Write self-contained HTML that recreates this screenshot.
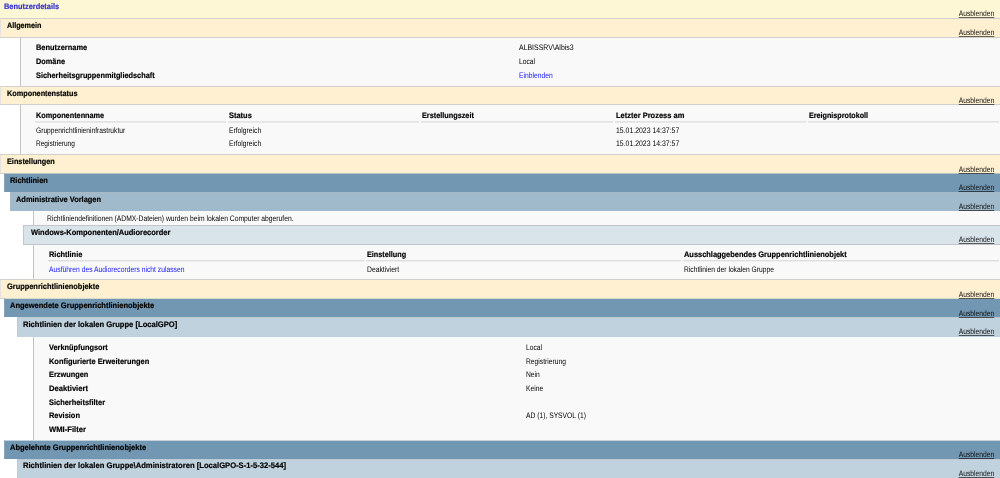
<!DOCTYPE html>
<html lang="de"><head><meta charset="utf-8"><title>Benutzerdetails</title>
<style>
html,body{margin:0;padding:0;background:#fff;}
body{width:1000px;height:478px;overflow:hidden;position:relative;font-family:"Liberation Sans",sans-serif;font-size:8.0px;color:#000;line-height:10px;text-rendering:geometricPrecision;}
.h{position:absolute;right:0;box-sizing:border-box;border:1px solid #c4c4c4;border-right:none;background-clip:padding-box;}
.h.y0{border-top:none;border-left:none;border-color:#d6d2c0;}
.h.y{border-color:#d0d0cc;border-left-color:#e2e2e2;}
.h.k{border-color:rgba(187,187,187,.35);border-bottom-color:transparent;background-clip:border-box;}
.h.g{border-color:#c2c6ca;}
.c{position:absolute;right:0;box-sizing:border-box;background:#F9F9F9;border-left:1px solid #c4c4c4;}
.t{position:absolute;white-space:nowrap;transform-origin:0 50%;transform:scaleX(0.84);}
.b{font-weight:bold;transform:scaleX(0.922);-webkit-text-stroke:0.2px currentColor;}
.a{left:auto;right:6px;transform-origin:100% 50%;text-decoration:underline;text-decoration-color:rgba(0,0,0,.6);color:#111;}
.txt{position:absolute;left:0;top:0;width:1000px;height:478px;will-change:opacity;}
.l{color:#1515ff;}
.u{position:absolute;height:2px;background:linear-gradient(#e3e3e3 50%,#e9e9e9 50%);}
.u2{background:linear-gradient(#dedede 50%,#eeeeee 50%);}
</style></head><body>
<div class="c" style="left:20px;top:37px;height:49px"></div>
<div class="c" style="left:20px;top:104px;height:50px"></div>
<div class="c" style="left:33px;top:210px;height:15px"></div>
<div class="c" style="left:33px;top:244px;height:36px"></div>
<div class="c" style="left:33px;top:336px;height:105px"></div>
<div class="h y0" style="left:0px;top:0px;height:19px;background-color:#FEF7D6"></div>
<div class="h y" style="left:0px;top:18px;height:20px;background-color:#FEF0D0"></div>
<div class="h y" style="left:0px;top:86px;height:19px;background-color:#FEF0D0"></div>
<div class="h y" style="left:0px;top:154px;height:20px;background-color:#FEF0D0"></div>
<div class="h k" style="left:4px;top:173px;height:19px;background-color:#7197B3;border-top-color:#B7C3C1"></div>
<div class="h k" style="left:10px;top:192px;height:19px;background-color:#A0BACB"></div>
<div class="h g" style="left:23px;top:225px;height:20px;background-color:#D9E3EA"></div>
<div class="h y" style="left:0px;top:279px;height:20px;background-color:#FEF0D0"></div>
<div class="h k" style="left:4px;top:298px;height:19px;background-color:#7197B3;border-top-color:#DBDAC9"></div>
<div class="h k" style="left:17px;top:317px;height:20px;background-color:#C0D2DE"></div>
<div class="h k" style="left:4px;top:440px;height:19px;background-color:#7197B3;border-top-color:#C3D2DD"></div>
<div class="h k" style="left:17px;top:459px;height:20px;background-color:#C0D2DE"></div>
<div class="txt">
<div class="t b" style="left:3.7px;top:2px;color:#3333CC;transform:scaleX(0.925)">Benutzerdetails</div>
<div class="t a" style="top:9px">Ausblenden</div>
<div class="t b" style="left:6.8px;top:21px;transform:scaleX(0.900)">Allgemein</div>
<div class="t a" style="top:28px">Ausblenden</div>
<div class="t b" style="left:6.9px;top:89px;transform:scaleX(0.912)">Komponentenstatus</div>
<div class="t a" style="top:96px">Ausblenden</div>
<div class="t b" style="left:6.8px;top:157px;transform:scaleX(0.911)">Einstellungen</div>
<div class="t a" style="top:165px">Ausblenden</div>
<div class="t b" style="left:9.9px;top:176px;transform:scaleX(0.924)">Richtlinien</div>
<div class="t a" style="top:183px">Ausblenden</div>
<div class="t b" style="left:16.2px;top:195px;transform:scaleX(0.930)">Administrative Vorlagen</div>
<div class="t a" style="top:202px">Ausblenden</div>
<div class="t b" style="left:30.8px;top:228px;transform:scaleX(0.937)">Windows-Komponenten/Audiorecorder</div>
<div class="t a" style="top:235px">Ausblenden</div>
<div class="t b" style="left:6.8px;top:282px;transform:scaleX(0.927)">Gruppenrichtlinienobjekte</div>
<div class="t a" style="top:290px">Ausblenden</div>
<div class="t b" style="left:9.9px;top:301px;transform:scaleX(0.938)">Angewendete Gruppenrichtlinienobjekte</div>
<div class="t a" style="top:309px">Ausblenden</div>
<div class="t b" style="left:22.8px;top:320px;transform:scaleX(0.951)">Richtlinien der lokalen Gruppe [LocalGPO]</div>
<div class="t a" style="top:327px">Ausblenden</div>
<div class="t b" style="left:9.9px;top:443px;transform:scaleX(0.936)">Abgelehnte Gruppenrichtlinienobjekte</div>
<div class="t a" style="top:450px">Ausblenden</div>
<div class="t b" style="left:22.8px;top:461px;transform:scaleX(0.953)">Richtlinien der lokalen Gruppe\Administratoren [LocalGPO-S-1-5-32-544]</div>
<div class="t a" style="top:469px">Ausblenden</div>
<div class="t b" style="left:36px;top:43px;transform:scaleX(0.927)">Benutzername</div>
<div class="t " style="left:519px;top:43px;transform:scaleX(0.867)">ALBISSRV\Albis3</div>
<div class="t b" style="left:36px;top:57px;transform:scaleX(0.919)">Domäne</div>
<div class="t " style="left:519px;top:57px">Local</div>
<div class="t b" style="left:36px;top:71px;transform:scaleX(0.917)">Sicherheitsgruppenmitgliedschaft</div>
<div class="t l" style="left:519px;top:71px">Einblenden</div>
<div class="t b" style="left:36.0px;top:111px;transform:scaleX(0.913)">Komponentenname</div>
<div class="u" style="left:35.0px;top:121px;width:191.2px"></div>
<div class="t b" style="left:229.2px;top:111px;transform:scaleX(0.932)">Status</div>
<div class="u" style="left:228.2px;top:121px;width:191.2px"></div>
<div class="t b" style="left:422.4px;top:111px;transform:scaleX(0.911)">Erstellungszeit</div>
<div class="u" style="left:421.4px;top:121px;width:191.2px"></div>
<div class="t b" style="left:615.6px;top:111px;transform:scaleX(0.938)">Letzter Prozess am</div>
<div class="u" style="left:614.6px;top:121px;width:191.2px"></div>
<div class="t b" style="left:808.8px;top:111px;transform:scaleX(0.898)">Ereignisprotokoll</div>
<div class="u" style="left:807.8px;top:121px;width:191.2px"></div>
<div class="t " style="left:36px;top:126px;transform:scaleX(0.832)">Gruppenrichtlinieninfrastruktur</div>
<div class="t " style="left:229.2px;top:126px">Erfolgreich</div>
<div class="t " style="left:615.6px;top:126px;transform:scaleX(0.862)">15.01.2023 14:37:57</div>
<div class="t " style="left:36px;top:139px;transform:scaleX(0.816)">Registrierung</div>
<div class="t " style="left:229.2px;top:139px">Erfolgreich</div>
<div class="t " style="left:615.6px;top:139px;transform:scaleX(0.862)">15.01.2023 14:37:57</div>
<div class="t " style="left:47px;top:214px;transform:scaleX(0.844)">Richtliniendefinitionen (ADMX-Dateien) wurden beim lokalen Computer abgerufen.</div>
<div class="t b" style="left:49.0px;top:250px;transform:scaleX(0.925)">Richtlinie</div>
<div class="u u2" style="left:48.0px;top:260px;width:315.7px"></div>
<div class="t b" style="left:366.7px;top:250px;transform:scaleX(0.906)">Einstellung</div>
<div class="u u2" style="left:365.7px;top:260px;width:315.7px"></div>
<div class="t b" style="left:684.3px;top:250px;transform:scaleX(0.929)">Ausschlaggebendes Gruppenrichtlinienobjekt</div>
<div class="u u2" style="left:683.3px;top:260px;width:315.7px"></div>
<div class="t l" style="left:49px;top:265px;transform:scaleX(0.844)">Ausführen des Audiorecorders nicht zulassen</div>
<div class="t " style="left:366.7px;top:265px;transform:scaleX(0.848)">Deaktiviert</div>
<div class="t " style="left:684.3px;top:265px;transform:scaleX(0.839)">Richtlinien der lokalen Gruppe</div>
<div class="t b" style="left:49px;top:343px;transform:scaleX(0.919)">Verknüpfungsort</div>
<div class="t " style="left:525.5px;top:343px">Local</div>
<div class="t b" style="left:49px;top:357px;transform:scaleX(0.928)">Konfigurierte Erweiterungen</div>
<div class="t " style="left:525.5px;top:357px">Registrierung</div>
<div class="t b" style="left:49px;top:370px;transform:scaleX(0.919)">Erzwungen</div>
<div class="t " style="left:525.5px;top:370px">Nein</div>
<div class="t b" style="left:49px;top:384px;transform:scaleX(0.953)">Deaktiviert</div>
<div class="t " style="left:525.5px;top:384px">Keine</div>
<div class="t b" style="left:49px;top:398px;transform:scaleX(0.928)">Sicherheitsfilter</div>
<div class="t b" style="left:49px;top:411px;transform:scaleX(0.927)">Revision</div>
<div class="t " style="left:525.5px;top:411px">AD (1), SYSVOL (1)</div>
<div class="t b" style="left:49px;top:425px;transform:scaleX(0.954)">WMI-Filter</div>
</div>
</body></html>
